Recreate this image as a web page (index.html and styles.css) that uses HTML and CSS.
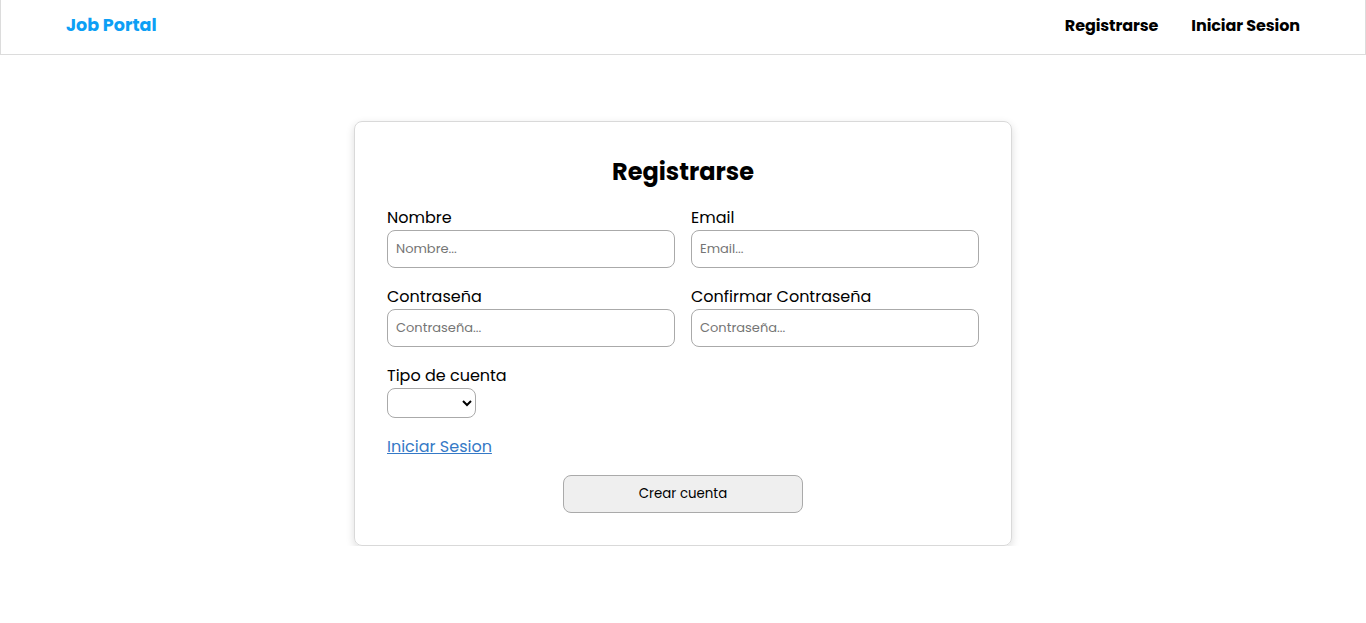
FILE: index.html
```html
<!DOCTYPE html>
<html lang="es">
<head>
<meta charset="utf-8">
<title>Job Portal</title>
<link rel="stylesheet" href="styles.css">
</head>
<body>
<header class="navbar">
  <a class="brand" href="#">Job Portal</a>
  <nav class="nav-links">
    <a href="#">Registrarse</a>
    <a href="#">Iniciar Sesion</a>
  </nav>
</header>
<main class="main">
  <form class="card">
    <h1 class="title">Registrarse</h1>
    <div class="grid">
      <div class="field">
        <label>Nombre</label>
        <input type="text" placeholder="Nombre...">
      </div>
      <div class="field">
        <label>Email</label>
        <input type="email" placeholder="Email...">
      </div>
      <div class="field">
        <label>Contraseña</label>
        <input type="password" placeholder="Contraseña...">
      </div>
      <div class="field">
        <label>Confirmar Contraseña</label>
        <input type="password" placeholder="Contraseña...">
      </div>
    </div>
    <div class="field">
      <label>Tipo de cuenta</label>
      <select class="select"><option></option></select>
    </div>
    <a class="link" href="#">Iniciar Sesion</a>
    <div class="actions">
      <button type="button" class="btn">Crear cuenta</button>
    </div>
  </form>
</main>
</body>
</html>
```
FILE: styles.css
```css
* { box-sizing: border-box; }
body {
  margin: 0;
  font-family: "Poppins", "Inter", "DejaVu Sans", sans-serif;
  color: #000;
  background: #fff;
}
.navbar {
  height: 55px;
  display: flex;
  align-items: center;
  justify-content: space-between;
  padding: 0 65px 4px;
  border: 1px solid #dcdcdc;
  border-top: none;
}
.brand {
  color: #0d9ff5;
  font-weight: 700;
  font-size: 17.5px;
  text-decoration: none;
}
.nav-links {
  display: flex;
  gap: 33px;
}
.nav-links a {
  color: #000;
  font-weight: 700;
  font-size: 16px;
  letter-spacing: -0.1px;
  text-decoration: none;
}
.main {
  display: flex;
  justify-content: center;
  padding-top: 66px;
}
.card {
  width: 658px;
  border: 1px solid #d9d9d9;
  border-radius: 8px;
  padding: 32px;
  box-shadow: 0 3px 8px rgba(0,0,0,0.14);
  display: flex;
  flex-direction: column;
}
.title {
  margin: 0 0 15px;
  text-align: center;
  font-size: 24px;
  line-height: 36px;
  font-weight: 700;
}
.grid {
  display: grid;
  grid-template-columns: 1fr 1fr;
  column-gap: 16px;
  row-gap: 16px;
  margin-bottom: 16px;
}
.field {
  display: flex;
  flex-direction: column;
  align-items: flex-start;
}
.field label {
  font-size: 16px;
  line-height: 24px;
  padding-top: 1px;
}
.field input {
  width: 100%;
  height: 38px;
  border: 1px solid #aaa;
  border-radius: 8px;
  padding: 0 8px;
  font-family: inherit;
  font-size: 13px;
}
.field input::placeholder { color: #757575; }
.select {
  width: 89px;
  height: 30px;
  border: 1px solid #aaa;
  border-radius: 8px;
  background: #fff;
  font-family: inherit;
}
.link {
  margin-top: 17px;
  align-self: flex-start;
  color: #3579c6;
  font-size: 16px;
  line-height: 24px;
}
.actions {
  margin-top: 16px;
  display: flex;
  justify-content: center;
}
.btn {
  width: 240px;
  height: 38px;
  background: #efefef;
  border: 1px solid #aaa;
  border-radius: 8px;
  font-family: inherit;
  font-size: 13.333px;
  color: #000;
}
```
